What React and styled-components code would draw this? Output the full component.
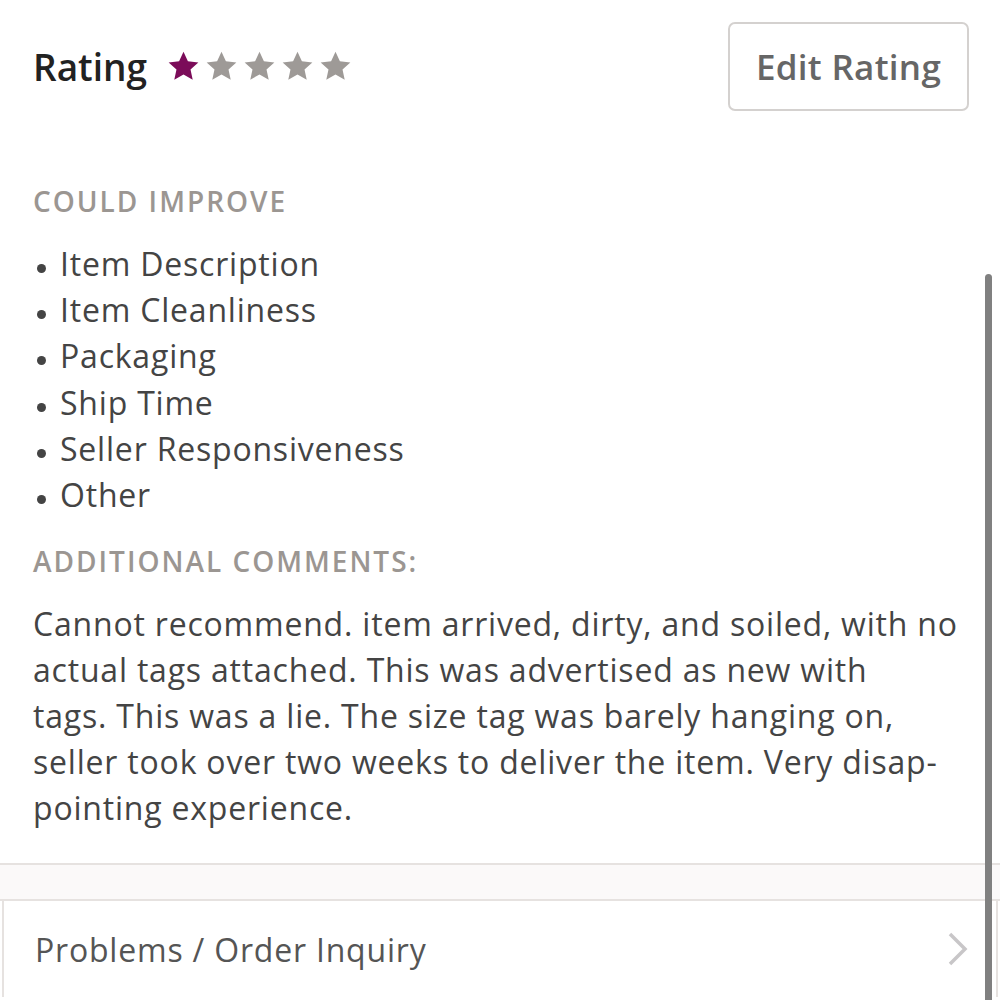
import React from 'react';
import styled, { createGlobalStyle } from 'styled-components';

const GlobalStyle = createGlobalStyle`
  html, body {
    margin: 0;
    padding: 0;
    background: #fff;
  }
  body {
    font-family: "Open Sans", Lato, "Liberation Sans", sans-serif;
    -webkit-font-smoothing: antialiased;
  }
`;

const improvements = [
  'Item Description',
  'Item Cleanliness',
  'Packaging',
  'Ship Time',
  'Seller Responsiveness',
  'Other',
];

const commentLines = [
  'Cannot recommend. item arrived, dirty, and soiled, with no',
  'actual tags attached. This was advertised as new with',
  'tags. This was a lie. The size tag was barely hanging on,',
  'seller took over two weeks to deliver the item. Very disap-',
  'pointing experience.',
];

const Star = ({ filled }) => (
  <StarIcon viewBox="0 0 24 24" $filled={filled}>
    <path d="M12 1.2l3.2 7 7.6.8-5.7 5.1 1.6 7.5L12 17.8l-6.7 3.8 1.6-7.5L1.2 9l7.6-.8z" />
  </StarIcon>
);

const App = () => {
  const rating = 1;
  return (
    <Page>
      <GlobalStyle />
      <Content>
        <Header>
          <TitleGroup>
            <Title>Rating</Title>
            <Stars>
              {[1, 2, 3, 4, 5].map((n) => (
                <Star key={n} filled={n <= rating} />
              ))}
            </Stars>
          </TitleGroup>
          <EditButton>Edit Rating</EditButton>
        </Header>

        <SectionLabel>Could Improve</SectionLabel>
        <List>
          {improvements.map((item) => (
            <ListItem key={item}>{item}</ListItem>
          ))}
        </List>

        <SectionLabel $tight>Additional Comments:</SectionLabel>
        <Comment>
          {commentLines.map((line, i) => (
            <React.Fragment key={i}>
              {line}
              {i < commentLines.length - 1 && <br />}
            </React.Fragment>
          ))}
        </Comment>
      </Content>

      <Band />

      <InquiryRow>
        <InquiryText>Problems / Order Inquiry</InquiryText>
        <Chevron viewBox="0 0 24 36">
          <path d="M4 3l15 15L4 33" />
        </Chevron>
      </InquiryRow>

      <ScrollThumb />
    </Page>
  );
};

const Page = styled.div`
  position: relative;
  width: 1000px;
  height: 1000px;
  overflow: hidden;
  background: #fff;
`;

const Content = styled.div`
  padding: 22px 31px 32px 33px;
  border-bottom: 2px solid #e6e2e0;
`;

const Header = styled.div`
  display: flex;
  justify-content: space-between;
  align-items: center;
`;

const TitleGroup = styled.div`
  display: flex;
  align-items: center;
  gap: 20px;
`;

const Title = styled.h1`
  margin: 0;
  font-size: 37px;
  font-weight: 600;
  color: #222;
`;

const Stars = styled.div`
  display: flex;
  gap: 5px;
`;

const StarIcon = styled.svg`
  width: 33px;
  height: 33px;
  fill: ${(p) => (p.$filled ? '#7b0c59' : '#9e9a97')};
`;

const EditButton = styled.button`
  width: 241px;
  height: 89px;
  border: 2px solid #d4d1cf;
  border-radius: 7px;
  background: #fff;
  font-family: inherit;
  font-size: 35px;
  font-weight: 600;
  letter-spacing: 0.3px;
  color: #666;
  padding: 0;
`;

const SectionLabel = styled.div`
  margin-top: ${(p) => (p.$tight ? '28px' : '75px')};
  font-size: 28px;
  font-weight: 600;
  text-transform: uppercase;
  letter-spacing: 2px;
  color: #9b9692;
  line-height: 30px;
`;

const List = styled.ul`
  margin: 25px 0 0;
  padding: 0 0 0 27px;
  list-style: none;
`;

const ListItem = styled.li`
  position: relative;
  font-size: 32px;
  letter-spacing: 0.8px;
  line-height: 46.2px;
  color: #444;
  &::before {
    content: '';
    position: absolute;
    left: -23px;
    top: 23px;
    width: 9px;
    height: 9px;
    border-radius: 50%;
    background: #444;
  }
`;

const Comment = styled.p`
  margin: 25px 0 0;
  font-size: 32px;
  letter-spacing: 0.8px;
  line-height: 46px;
  color: #444;
  white-space: nowrap;
`;

const Band = styled.div`
  height: 34px;
  background: #fbf9f9;
  border-bottom: 2px solid #e6e2e0;
`;

const InquiryRow = styled.div`
  display: flex;
  align-items: center;
  justify-content: space-between;
  height: 96px;
  margin: 0 2px;
  padding: 0 26px 0 31px;
  border-left: 2px solid #e6e2e0;
  border-right: 2px solid #e6e2e0;
`;

const InquiryText = styled.span`
  font-size: 32px;
  letter-spacing: 0.8px;
  font-weight: 400;
  color: #555;
`;

const Chevron = styled.svg`
  width: 24px;
  height: 36px;
  fill: none;
  stroke: #c8c6c8;
  stroke-width: 3.5;
`;

const ScrollThumb = styled.div`
  position: absolute;
  right: 8px;
  top: 274px;
  width: 7px;
  height: 760px;
  border-radius: 4px;
  background: #808080;
`;

export default App;
